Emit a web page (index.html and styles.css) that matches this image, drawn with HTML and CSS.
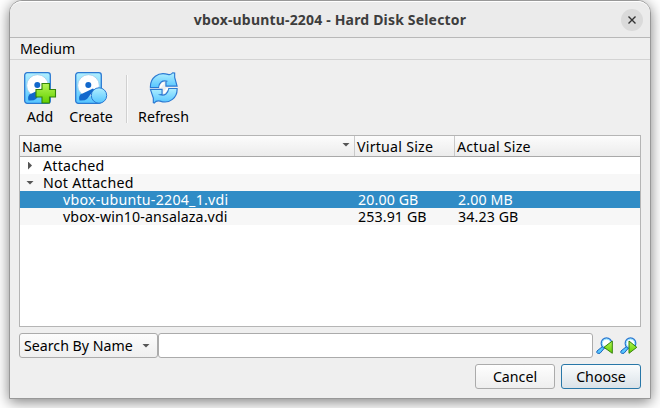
FILE: index.html
```
<!DOCTYPE html>
<html lang="en">
<head>
<meta charset="utf-8">
<title>Hard Disk Selector</title>
<link rel="stylesheet" href="styles.css">
</head>
<body>
<svg class="defs" width="0" height="0" aria-hidden="true">
  <defs>
    <linearGradient id="blue" x1="0" y1="0" x2="0" y2="1"><stop offset="0" stop-color="#b0efff"/><stop offset="1" stop-color="#55c5ff"/></linearGradient>
    <linearGradient id="green" x1="0" y1="0" x2="0" y2="1"><stop offset="0" stop-color="#b5f556"/><stop offset="1" stop-color="#62d000"/></linearGradient>
    <g id="disk">
      <rect x=".7" y=".7" width="25.600" height="30.600" rx="2.5" fill="url(#blue)" stroke="#2b79d2" stroke-width="1.3"/>
      <circle cx="13.500" cy="13.500" r="10.800" fill="#fff" stroke="#8fc4e8" stroke-width=".7"/>
      <path d="M18 16.500 L19.300 17.800 L12 27 Q10 28.800 4.500 28.500 Q3.200 24 6 22.300Z" fill="#1268cc"/>
      <circle cx="13.300" cy="13" r="3" fill="#1268cc"/>
    </g>
    <g id="lens">
      <path d="M6.500 9.500 L1 14 Q.2 15.500 1.500 16.300 L4 16.300 L8.500 11Z" fill="#58c7ff" stroke="#1764be" stroke-width="1"/>
      <circle cx="10.500" cy="6.300" r="5.300" fill="#fff" stroke="#2b79d2" stroke-width="1.3"/>
      <circle cx="10.500" cy="6.300" r="4.200" fill="none" stroke="#8ce2ff" stroke-width="1"/>
    </g>
  </defs>
</svg>
<div class="window">
  <header class="titlebar">
    <h1 class="title">vbox-ubuntu-2204 - Hard Disk Selector</h1>
    <button class="close" aria-label="Close"><svg width="8" height="8" viewBox="0 0 8 8"><path d="M.5.5 7.5 7.5M7.5.5.5 7.5" stroke="#333" stroke-width="1.4"/></svg></button>
  </header>
  <nav class="menubar"><span class="menu-item">Medium</span></nav>
  <div class="toolbar">
    <div class="tool add">
      <svg width="33" height="32" viewBox="0 0 33 32"><use href="#disk"/><path d="M18 11.500h7.500v6h6v7.500h-6v6h-7.500v-6h-6v-7.500h6z" fill="url(#green)" stroke="#35830a" stroke-width="1.1"/></svg>
      <span class="label">Add</span>
    </div>
    <div class="tool create">
      <svg width="33" height="32" viewBox="0 0 33 32"><use href="#disk"/><circle cx="24" cy="23.500" r="7.700" fill="url(#blue)" stroke="#2b79d2" stroke-width="1"/></svg>
      <span class="label">Create</span>
    </div>
    <div class="separator"></div>
    <div class="tool refresh">
      <svg width="30" height="32" viewBox="0 0 30 33">
        <path d="M1 16 C.5 6 9 -.5 19 2.500 Q22 3.500 24 .8 L26 1 V5.500 L28.500 14.500 H17 V9.500 L18.500 9.500 C13 8 10 11 9.500 16Z" fill="url(#blue)" stroke="#2b79d2" stroke-width="1.2"/>
        <path d="M1 18 H13 V23 L11 23.500 C16 25 19 22 20 17 H28.500 C29 26 21 33.500 11 30 Q7 29 5 32 L4 31.500 V27Z" fill="url(#blue)" stroke="#2b79d2" stroke-width="1.2"/>
        <path d="M15 11.500 C12.500 12 12.500 15 10.500 16 M14.500 21.500 C17 20 17 18 19 17" fill="none" stroke="#fff" stroke-width="1.700"/>
      </svg>
      <span class="label">Refresh</span>
    </div>
  </div>
  <section class="tree">
    <div class="row head">
      <div class="cell name-head"><span class="t-name">Name</span><i class="down sort"></i></div>
      <div class="cell"><span class="wide">Virtual Size</span></div>
      <div class="cell"><span class="wide">Actual Size</span></div>
    </div>
    <div class="row group"><div class="cell"><i class="right"></i><span class="wide">Attached</span></div></div>
    <div class="row group alt"><div class="cell"><i class="down"></i><span class="wide">Not Attached</span></div></div>
    <div class="row item selected"><div class="cell"><span class="wide">vbox-ubuntu-2204_1.vdi</span></div><div class="cell"><span class="num">20.00 GB</span></div><div class="cell"><span class="num">2.00 MB</span></div></div>
    <div class="row item alt"><div class="cell"><span class="num">vbox-win10-ansalaza.vdi</span></div><div class="cell"><span class="num">253.91 GB</span></div><div class="cell"><span class="num">34.23 GB</span></div></div>
  </section>
  <div class="search">
    <div class="combo"><span class="t-search">Search By Name</span><i class="down"></i></div>
    <input class="field" type="text" aria-label="Search">
    <svg class="find" width="18" height="18" viewBox="0 0 18 18"><use href="#lens"/><path d="M16.300 4V16.300L8 10.300Z" fill="url(#green)" stroke="#35830a" stroke-width="1"/></svg>
    <svg class="find" width="18" height="18" viewBox="0 0 18 18"><use href="#lens"/><path d="M9 4V16.300L16.800 10.300Z" fill="url(#green)" stroke="#35830a" stroke-width="1"/></svg>
  </div>
  <footer class="actions">
    <button class="button"><span>Cancel</span></button>
    <button class="button primary"><span>Choose</span></button>
  </footer>
</div>
</body>
</html>
```

FILE: styles.css
```
* { box-sizing: border-box; }
body {
  margin: 0; width: 660px; height: 408px; overflow: hidden;
  background: #fff; color: #000;
  font: 14.2px/17px "Noto Sans", "Open Sans", sans-serif;
}
.defs { display: block; height: 0; }
span, h1 { white-space: nowrap; }
svg { display: block; flex: none; }
.window {
  width: 642px; height: 399px; margin-left: 9px;
  border: 1px solid #989898; border-radius: 13px 13px 0 0;
  background: #efefef;
  box-shadow: 0 3px 14px rgba(0,0,0,.5);
  display: flex; flex-direction: column;
}
.titlebar {
  height: 37px; flex: none; display: grid;
  grid-template-columns: 1fr auto 1fr; align-items: center;
  border-top: 1px solid #fff; border-bottom: 1px solid #b8b8b8;
  border-radius: 12px 12px 0 0; background: #ebebeb;
}
.title { grid-column: 2; margin: 0; font-size: 14px; line-height: 20px; font-weight: 700; color: #3d3d3d; letter-spacing: .18px; }
.close {
  justify-self: end; margin-right: 7px; width: 22px; height: 22px; padding: 0;
  border: 0; border-radius: 50%; background: #dadada;
  display: flex; align-items: center; justify-content: center;
}
.menubar { height: 22px; flex: none; padding: 2px 10px; border-bottom: 1px solid #d3d3d3; }
.toolbar { height: 75px; flex: none; display: flex; padding: 12px 0 0 14px; }
.tool { display: flex; flex-direction: column; align-items: center; }
.tool .label { margin-top: 4px; }
.tool.add { width: 32px; }
.add svg { margin-left: 1px; }
.tool.create { width: 46px; margin-left: 12px; }
.create svg { margin-left: 1px; }
.separator { width: 1px; height: 48px; margin: 3px 10px 0 12px; background: #d0d0d0; box-shadow: 1px 0 #fafafa; }
.tool.refresh { width: 53px; }
.tree { height: 192px; flex: none; margin: 0 9px; border: 1px solid #b5b5b5; background: #fff; }
.row { display: grid; grid-template-columns: 334px 100px 1fr; height: 17px; }
.cell { display: flex; align-items: center; padding-left: 4px; min-width: 0; }
.wide { letter-spacing: .24px; }
.num { letter-spacing: .12px; }
.head { height: 21px; border-bottom: 1px solid #a9a9a9; background: linear-gradient(#fcfcfc, #ececec); }
.head .cell + .cell { border-left: 1px solid #c9c9c9; padding-left: 2px; }
.row > .name-head:first-child { padding: 0 4px 0 2px; justify-content: space-between; }
.group > .cell:first-child { padding-left: 6px; }
.group i { margin-right: 9px; }
.item > .cell:first-child { padding-left: 43px; }
.alt { background: #f7f7f7; }
.selected { background: #308cc6; color: #fff; }
.down { width: 8px; height: 4px; background: #555; clip-path: polygon(0 0, 100% 0, 50% 100%); }
.right { width: 4px; height: 8px; margin-left: 2px; background: #555; clip-path: polygon(0 0, 100% 50%, 0 100%); }
.group .right { margin-right: 11px; }
.sort { margin-bottom: 3px; }
.search { height: 25px; flex: none; display: flex; margin: 6px 9px 0; align-items: center; }
.combo {
  width: 139px; height: 25px; display: flex; align-items: center; justify-content: space-between;
  padding: 0 7px 0 4px; border: 1px solid #ababab; border-radius: 3px;
  background: linear-gradient(#fcfcfc, #efefef);
}
.field { width: 435px; height: 25px; border: 1px solid #ababab; border-radius: 3px; background: #fff; margin: 0 3px 0 0; padding: 0 4px; outline: 0; }
.find + .find { margin-left: 6px; }
.actions { display: flex; justify-content: flex-end; gap: 6px; margin: 6px 9px 0; }
.button {
  width: 80px; height: 25px; padding: 0; border: 1px solid #ababab; border-radius: 3px;
  background: linear-gradient(#fefefe, #eee); font: inherit; color: #000;
}
.primary { border-color: #2877a8; background: linear-gradient(#fafcfd, #dae2e8); }
```
